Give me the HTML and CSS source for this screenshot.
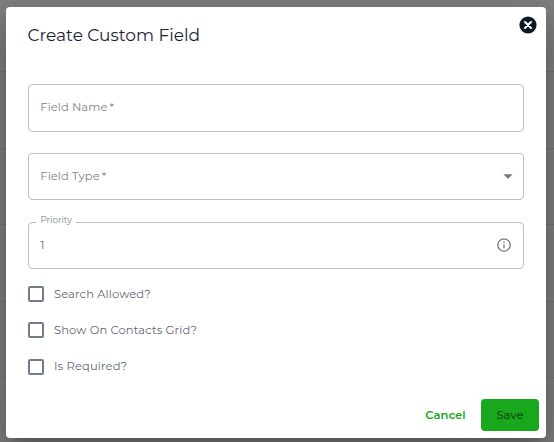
FILE: index.html
```
<!DOCTYPE html>
<html lang="en">
<head>
<meta charset="utf-8">
<title>Create Custom Field</title>
<link rel="stylesheet" href="styles.css">
</head>
<body>
<main class="dialog">
  <header class="header">
    <h1>Create Custom Field</h1>
    <button class="close" aria-label="Close">
      <svg width="18" height="18" viewBox="0 0 18 18"><circle cx="9" cy="9" r="8.6" fill="#111827"/><path d="M6 6l6 6M12 6l-6 6" stroke="#fff" stroke-width="2.1" stroke-linecap="round"/></svg>
    </button>
  </header>
  <form class="fields">
    <div class="field tall"><span>Field Name<i>*</i></span></div>
    <div class="field"><span>Field Type<i>*</i></span>
      <svg class="arrow" width="10" height="5" viewBox="0 0 10 5"><path d="M0.3 0.2h9.2L4.9 4.8z" fill="#757575"/></svg>
    </div>
    <div class="field"><label class="legend">Priority</label><span class="value">1</span>
      <svg class="info" width="14" height="14" viewBox="0 0 14 14"><circle cx="7" cy="7" r="6.2" fill="none" stroke="#757575" stroke-width="1.3"/><path d="M7 6.3v4M7 3.6v1.4" stroke="#757575" stroke-width="1.3"/></svg>
    </div>
  </form>
  <section class="checks">
    <label><span class="box"></span><span>Search Allowed?</span></label>
    <label><span class="box"></span><span>Show On Contacts Grid?</span></label>
    <label><span class="box"></span><span>Is Required?</span></label>
  </section>
  <footer class="actions">
    <button class="cancel">Cancel</button>
    <button class="save">Save</button>
  </footer>
</main>
</body>
</html>
```
FILE: styles.css
```
* { box-sizing: border-box; }
body {
  margin: 0;
  width: 554px;
  height: 442px;
  padding: 7px 8px 4px 6px;
  overflow: hidden;
  font-family: Montserrat, Inter, sans-serif;
  font-size: 11.5px;
  color: #636774;
  background: linear-gradient(#707070, #707070) 0 71px / 100% 1px no-repeat,
    linear-gradient(#707070, #707070) 0 148px / 100% 1px no-repeat,
    linear-gradient(#707070, #707070) 0 224px / 100% 1px no-repeat,
    linear-gradient(#707070, #707070) 0 301px / 100% 1px no-repeat,
    linear-gradient(#707070, #707070) 0 377px / 100% 1px no-repeat,
    #7f7f7f;
}
button { border: 0; padding: 0; background: none; font: inherit; }
.dialog {
  height: 431px;
  background: #fff;
  border-radius: 4px;
  display: flex;
  flex-direction: column;
  box-shadow: 0 11px 15px -7px rgba(0,0,0,.2), 0 24px 38px 3px rgba(0,0,0,.14), 0 9px 46px 8px rgba(0,0,0,.12);
}
.header {
  height: 77px;
  padding: 9px 9px 0 21.5px;
  display: flex;
  justify-content: space-between;
  align-items: flex-start;
}
h1 {
  margin: 8px 0 0;
  font-size: 17px;
  line-height: 22px;
  font-weight: 400;
  letter-spacing: -0.02px;
  color: #1b2335;
}
.close { width: 18px; height: 18px; display: flex; }
.fields { padding: 0 22px; display: grid; gap: 22px; }
.field {
  position: relative;
  height: 47px;
  border: 1px solid #bfbfbf;
  border-radius: 4px;
  padding: 0 12px 1px 11.3px;
  display: flex;
  align-items: center;
  justify-content: space-between;
  color: #80838f;
  letter-spacing: 0.06px;
}
.tall { height: 48px; margin-bottom: -1px; padding-bottom: 2px; }
.field i { font-style: normal; margin-left: 2px; }
.arrow { margin-right: -2px; }
.legend {
  position: absolute;
  left: 6.5px;
  top: -9px;
  padding: 0 4.5px 0 5px;
  background: #fff;
  font-size: 8.8px;
  line-height: 12px;
  letter-spacing: 0;
}
.value { color: #636774; }
.checks { padding: 15px 22px 0; display: grid; gap: 16px; letter-spacing: 0.13px; }
.checks label { display: flex; align-items: center; height: 20.3px; gap: 10px; }
.checks label:last-child span:last-child { margin-bottom: 1.4px; }
.box { width: 16px; height: 16px; border: 2px solid #747c8b; border-radius: 2px; }
.actions {
  margin-top: auto;
  padding: 0 7px 7px;
  display: flex;
  justify-content: flex-end;
  align-items: center;
  gap: 15.5px;
  font-weight: 500;
  letter-spacing: 0.12px;
}
.cancel { color: #17a81d; font-weight: 600; }
.save { width: 58px; height: 32px; border-radius: 4px; background: #18a71d; color: #0b4d12; }
```
